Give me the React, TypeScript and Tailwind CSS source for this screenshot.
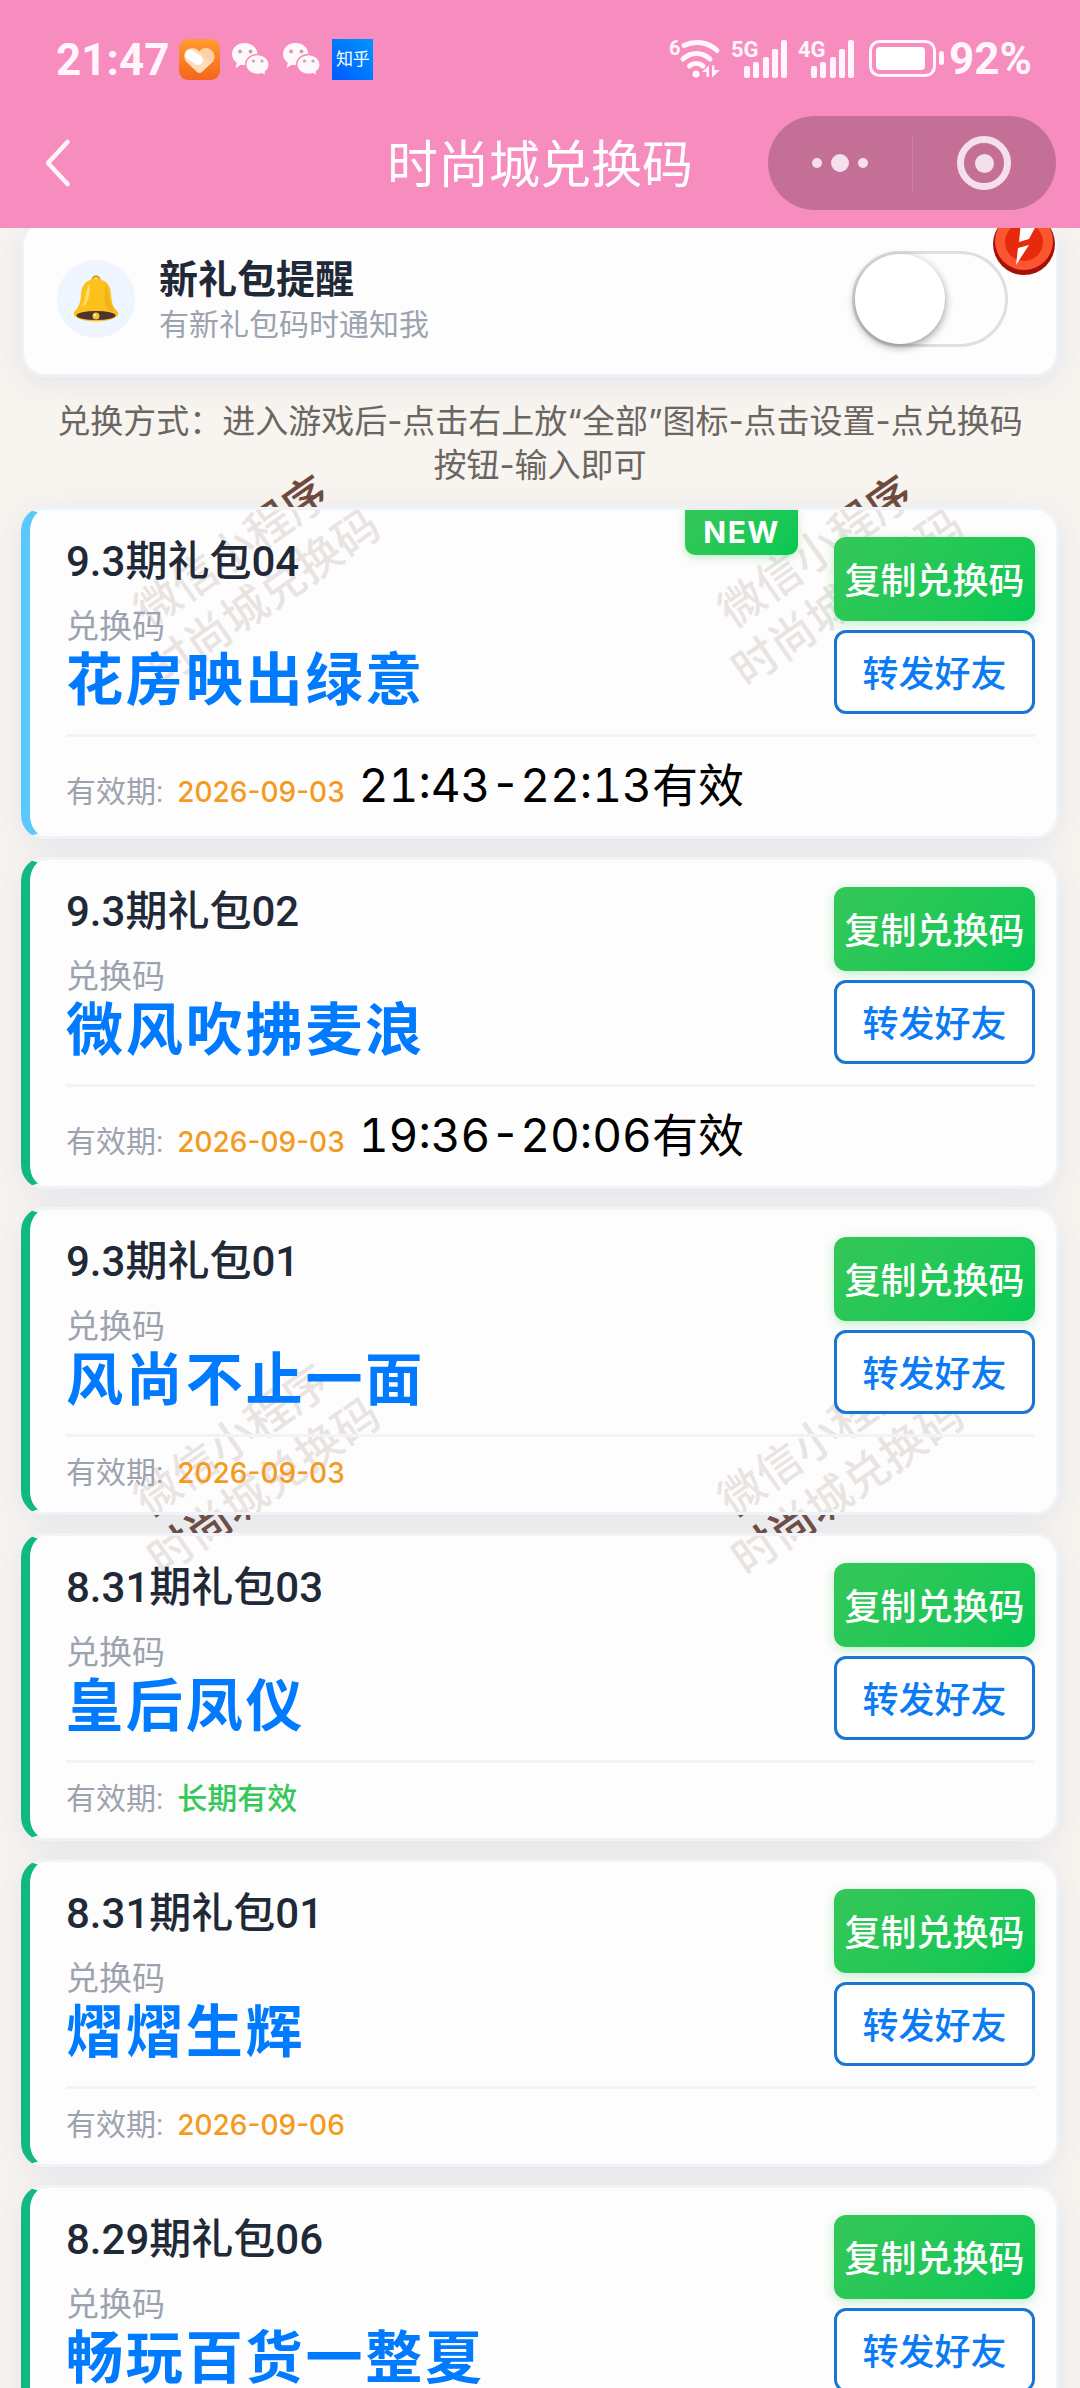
import { useState } from 'react';

type Gift = {
  id: number;
  title: string;
  code: string;
  expires: string;
  time?: string;
  isNew?: boolean;
  longTerm?: boolean;
};

const gifts: Gift[] = [
  { id: 1, title: '9.3期礼包04', code: '花房映出绿意', expires: '2026-09-03', time: '21:43-22:13有效', isNew: true },
  { id: 2, title: '9.3期礼包02', code: '微风吹拂麦浪', expires: '2026-09-03', time: '19:36-20:06有效' },
  { id: 3, title: '9.3期礼包01', code: '风尚不止一面', expires: '2026-09-03' },
  { id: 4, title: '8.31期礼包03', code: '皇后凤仪', expires: '长期有效', longTerm: true },
  { id: 5, title: '8.31期礼包01', code: '熠熠生辉', expires: '2026-09-06' },
  { id: 6, title: '8.29期礼包06', code: '畅玩百货一整夏', expires: '2026-09-06' },
];

function HeartAppIcon() {
  return (
    <svg width="41" height="41" viewBox="0 0 41 41" fill="none" aria-hidden="true">
      <defs>
        <linearGradient id="heart-bg" x1="0" y1="0" x2="0" y2="1">
          <stop offset="0" stopColor="#ff9c2e" />
          <stop offset="1" stopColor="#f4651c" />
        </linearGradient>
      </defs>
      <rect width="41" height="41" rx="9" fill="url(#heart-bg)" />
      <path
        d="M20.500 12.500C23 8.500 29 8 32.500 11.500C36.500 15.500 36.500 20 33 23.500L23 33Q20.500 35 18 33L8 23.500C4.500 20 4.500 14.500 7.500 11.500C11 8 17.500 8.500 20.500 12.500Z"
        fill="#ffdcbc"
      />
      <path d="M11 15.500L19 21" stroke="#fff" strokeWidth="10" strokeLinecap="round" />
      <path d="M20.500 12.500C23 8.500 29 8 32.500 11.500C36.500 15.500 35.500 20 33 23.500L24 18Z" fill="#ffd0a4" />
    </svg>
  );
}

function WechatIcon() {
  return (
    <svg width="41" height="41" viewBox="0 0 41 41" aria-hidden="true">
      <path
        d="M14.500 4C7.500 4 2 8.800 2 15c0 3.600 1.800 6.700 4.800 8.700L5.500 29l5.300-3.200c1.200.2 2.400.3 3.700.3 7 0 12.800-4.900 12.800-11.100S21.500 4 14.500 4Z"
        fill="#fff8fb"
      />
      <path
        d="M27.500 15.500c-6.600 0-11.800 4.400-11.800 10s5.200 10 11.800 10c1.600 0 3-.2 4.400-.7l4.300 2.500-1-4.300c2.500-1.800 4-4.500 4-7.500 0-5.600-5.100-10-11.700-10Z"
        fill="#fff8fb"
        stroke="#f68dbe"
        strokeWidth="1.500"
      />
      <g fill="#c9a0b4">
        <circle cx="10" cy="12.500" r="1.900" />
        <circle cx="20.500" cy="12.500" r="1.900" />
        <circle cx="23.500" cy="22" r="1.600" />
        <circle cx="32" cy="22" r="1.600" />
      </g>
    </svg>
  );
}

function WifiIcon() {
  return (
    <svg width="52" height="42" viewBox="0 0 52 42" fill="none" aria-hidden="true">
      <text x="0" y="17" fontSize="20" fontWeight="700" fontFamily="Roboto" fill="#fff5fa">
        6
      </text>
      <g stroke="#fff5fa" strokeWidth="5" strokeLinecap="round">
        <path d="M15 7.500C26 2 39 4 48 12.500" />
        <path d="M14 21C22 13.500 33 13.500 41 21" />
        <path d="M20.500 28C24.500 24.500 30 24.500 34 28" />
      </g>
      <circle cx="27" cy="36" r="3.500" fill="#fff5fa" />
      <path d="M33 34L40 27.500V39H37.500V34ZM43 27.500H45.500V32H51L43 39.500Z" fill="#fff5fa" />
    </svg>
  );
}

function SignalIcon({ label }: { label: string }) {
  return (
    <svg width="57" height="42" viewBox="0 0 57 42" fill="#fff5fa" aria-hidden="true">
      <text x="0" y="19" fontSize="22" fontWeight="700" fontFamily="Roboto">
        {label}
      </text>
      <rect x="13" y="28" width="6" height="12" rx="2" />
      <rect x="22" y="24" width="6" height="16" rx="2" />
      <rect x="32" y="19" width="6" height="21" rx="2" />
      <rect x="41" y="11" width="6" height="29" rx="2" />
      <rect x="50" y="2" width="6" height="38" rx="2" />
    </svg>
  );
}

function BatteryIcon() {
  return (
    <svg width="76" height="38" viewBox="0 0 76 38" aria-hidden="true">
      <rect x="1.500" y="1.500" width="64" height="34" rx="9" fill="none" stroke="#fff5fa" strokeWidth="3" />
      <rect x="7" y="7" width="49" height="23" rx="4" fill="#fff" />
      <rect x="70" y="11" width="5" height="14" rx="2.500" fill="#fff5fa" />
    </svg>
  );
}

function BellIcon() {
  return (
    <svg width="48" height="48" viewBox="0 0 48 48" aria-hidden="true">
      <circle cx="24" cy="5" r="3.500" fill="none" stroke="#e0a31c" strokeWidth="2.500" />
      <path
        d="M24 4C14 4 9.500 10.500 9 19C8.500 28 7 32 2.500 36.500C-1 41 8 46.500 24 46.500S49 41 45.500 36.500C41 32 39.500 28 39 19C38.500 10.500 34 4 24 4Z"
        fill="#fcc21b"
      />
      <path d="M33 9C38 14 35 27 43 36C40 37 36 36 34 33C31 27 34 15 33 9Z" fill="#e9a91d" opacity=".6" />
      <path d="M18 9C13 14 15 24 10 32C15 30 18 22 18 9Z" fill="#ffe36c" />
      <ellipse cx="24" cy="40.500" rx="19.500" ry="4.500" fill="#4e342e" />
      <circle cx="24" cy="41" r="3.500" fill="#f2c230" />
      <circle cx="23" cy="40" r="1.200" fill="#fff3b0" />
    </svg>
  );
}

function FlashBadge() {
  return (
    <svg width="64" height="66" viewBox="0 0 64 66" aria-hidden="true">
      <circle cx="32" cy="34" r="31" fill="#a80f08" />
      <circle cx="32" cy="31" r="29" fill="#fc5630" />
      <circle cx="32" cy="32" r="19" fill="#e62a0c" />
      <path d="M29 12H46L37 29L27 32Z" fill="#fff" />
      <path d="M26 38L37 35L24 55Z" fill="#fff" />
    </svg>
  );
}

function StatusBar() {
  return (
    <div className="flex h-20 items-end justify-between pr-12 pl-14">
      <div className="flex items-center gap-[10px]">
        <span className="text-[44px] leading-10 font-bold text-[#fff5fa]">21:47</span>
        <HeartAppIcon />
        <WechatIcon />
        <WechatIcon />
        <span className="flex size-[41px] items-center justify-center bg-linear-to-tr from-[#0058ff] to-[#0095ff] text-[17px] text-white">
          知乎
        </span>
      </div>
      <div className="flex items-center gap-[10px]">
        <WifiIcon />
        <SignalIcon label="5G" />
        <SignalIcon label="4G" />
        <div className="flex items-center gap-1 pl-1">
          <BatteryIcon />
          <span className="text-[44px] leading-10 font-bold text-[#fff5fa]">92%</span>
        </div>
      </div>
    </div>
  );
}

function NavBar() {
  return (
    <div className="mt-9 grid h-[94px] grid-cols-[1fr_auto_1fr] items-center px-6">
      <button type="button" aria-label="返回" className="ml-4 w-9">
        <svg width="36" height="50" viewBox="0 0 36 50" fill="none" aria-hidden="true">
          <path d="M27.500 4L8 25L27.500 46" stroke="#fff5fa" strokeWidth="4.500" strokeLinecap="round" strokeLinejoin="round" />
        </svg>
      </button>
      <h1 className="pb-1 font-['Noto_Sans_CJK_SC',sans-serif] text-[51px] leading-[60px] text-white">时尚城兑换码</h1>
      <div className="flex h-full w-[288px] items-center justify-self-end rounded-full bg-[#c36f96]">
        <button type="button" aria-label="更多" className="flex flex-1 items-center justify-center gap-[9px]">
          <i className="size-[10px] rounded-full bg-[#f3e0ea]" />
          <i className="size-[18px] rounded-full bg-[#f3e0ea]" />
          <i className="size-[10px] rounded-full bg-[#f3e0ea]" />
        </button>
        <span className="h-14 w-px bg-[#cc7fa3]" />
        <button type="button" aria-label="关闭" className="flex flex-1 items-center justify-center">
          <span className="flex size-[54px] items-center justify-center rounded-full border-[7px] border-[#f3e0ea]">
            <i className="size-[19px] rounded-full bg-[#f3e0ea]" />
          </span>
        </button>
      </div>
    </div>
  );
}

function ReminderCard() {
  const [enabled, setEnabled] = useState(false);

  return (
    <section className="relative -mt-2 flex items-center rounded-[24px] border-[3px] border-[#eef2f8] bg-white/85 pt-7 pr-[48px] pb-[27px] pl-[33px] shadow-[0_6px_30px_rgba(110,150,215,0.15)]">
      <div className="flex size-[78px] items-center justify-center rounded-full bg-[#eff5fe]">
        <BellIcon />
      </div>
      <label htmlFor="remind" className="ml-6 flex-1 pb-1 font-['Noto_Sans_CJK_SC',sans-serif]">
        <span className="block text-[39px] leading-[50px] font-bold text-[#1f2937]">新礼包提醒</span>
        <span className="block text-[30px] leading-[42px] text-[#9ca3af]">有新礼包码时通知我</span>
      </label>
      <div className="relative h-24 w-[156px]">
        <input
          id="remind"
          type="checkbox"
          role="switch"
          checked={enabled}
          onChange={() => setEnabled(!enabled)}
          className="peer size-full appearance-none rounded-full border-[3px] border-[#dfdfdf] bg-[#fdfdfd] checked:border-[#34c759] checked:bg-[#34c759]"
        />
        <span className="pointer-events-none absolute top-[3px] left-[3px] size-[90px] rounded-full bg-white shadow-[0_3px_9px_rgba(0,0,0,0.4)] peer-checked:left-[63px]" />
      </div>
      <span className="absolute -top-[13px] right-0">
        <FlashBadge />
      </span>
    </section>
  );
}

function GiftCard({ gift }: { gift: Gift }) {
  return (
    <li
      className={`relative rounded-[24px] border-[3px] border-l-[9px] border-[#f0f3f8] bg-white/85 pt-[27px] pr-[21px] pb-[21px] pl-9 font-['Noto_Sans_CJK_SC',sans-serif] shadow-[0_6px_30px_rgba(110,150,215,0.15)] ${
        gift.isNew ? 'border-l-[#5ac8fa]' : 'border-l-[#10b981]'
      }`}
    >
      {gift.isNew && (
        <span className="absolute top-0 right-[258px] rounded-b-[10px] bg-linear-135 from-[#34c759] to-[#00c853] px-[18px] font-[Inter] text-[30px] leading-[45px] font-bold tracking-wider text-white shadow-[0_3px_9px_rgba(52,199,89,0.3)]">
          NEW
        </span>
      )}
      <div className="flex justify-between">
        <div>
          <h2 className="font-[Roboto,'Noto_Sans_CJK_SC',sans-serif] text-[42px] leading-[50px] font-medium text-[#1f2937]">
            {gift.title}
          </h2>
          <p className="mt-4 text-[33px] leading-[42px] text-[#9ca3af]">兑换码</p>
          <p className="text-[57px] leading-[60px] font-bold tracking-wider text-[#007aff]">{gift.code}</p>
        </div>
        <div className="flex w-[201px] flex-col gap-[9px] text-[36px] font-medium">
          <button
            type="button"
            className="h-[84px] rounded-xl bg-linear-135 from-[#34c759] to-[#00c853] pb-[3px] text-white shadow-[0_3px_12px_rgba(52,199,89,0.3)]"
          >
            复制兑换码
          </button>
          <button type="button" className="h-[84px] rounded-xl border-[3px] border-[#1976d2] bg-white pb-[3px] text-[#0a7af5]">
            转发好友
          </button>
        </div>
      </div>
      <div className="mt-5 flex items-baseline border-t-[3px] border-[#f1f3f6] pt-[18px] font-[Roboto,'Noto_Sans_CJK_SC',sans-serif]">
        <span className="text-[30px] leading-9 text-[#9ca3af]">有效期:</span>
        {gift.longTerm ? (
          <span className="ml-[14px] text-[30px] leading-9 font-medium text-[#34c759]">{gift.expires}</span>
        ) : (
          <span className="ml-[14px] font-[Inter] text-[28px] leading-9 font-medium text-[#f39a1f]">{gift.expires}</span>
        )}
        {gift.time && (
          <span className="ml-[14px] font-[Inter,'Noto_Sans_CJK_SC',sans-serif] text-[46px] leading-[60px] text-black tabular-nums">
            {gift.time}
          </span>
        )}
      </div>
    </li>
  );
}

// Tiled watermark that sits under the translucent cards
function Watermark() {
  return (
    <div className="pointer-events-none absolute inset-x-0 top-[288px] grid grid-cols-[584px_584px] gap-y-[777px]" aria-hidden="true">
      {Array.from({ length: 4 }).map((_, index) => (
        <div key={index} className="h-[112px] w-[492px]">
          <p className="-rotate-35 text-center font-['Noto_Sans_CJK_SC',sans-serif] text-[45px] leading-[56px] font-medium text-[#6f4a3c]">
            微信小程序
            <br />
            时尚城兑换码
          </p>
        </div>
      ))}
    </div>
  );
}

export default function App() {
  return (
    <div className="flex h-screen flex-col overflow-hidden bg-[#f8f4ef] font-[Roboto,'Noto_Sans_CJK_SC',sans-serif]">
      <header className="z-10 shrink-0 bg-[#f68dbe] pb-[18px]">
        <StatusBar />
        <NavBar />
      </header>
      <main className="relative flex-1 px-[21px]">
        <Watermark />
        <ReminderCard />
        <p className="mx-auto max-w-[980px] pt-[22px] pb-5 text-center font-[Inter,'Noto_Sans_CJK_SC',sans-serif] text-[33px] leading-11 text-[#6b6662]">
          兑换方式：进入游戏后-点击右上放“全部”图标-点击设置-点兑换码按钮-输入即可
        </p>
        <ul className="relative flex flex-col gap-[18px]">
          {gifts.map((gift) => (
            <GiftCard key={gift.id} gift={gift} />
          ))}
        </ul>
      </main>
    </div>
  );
}
